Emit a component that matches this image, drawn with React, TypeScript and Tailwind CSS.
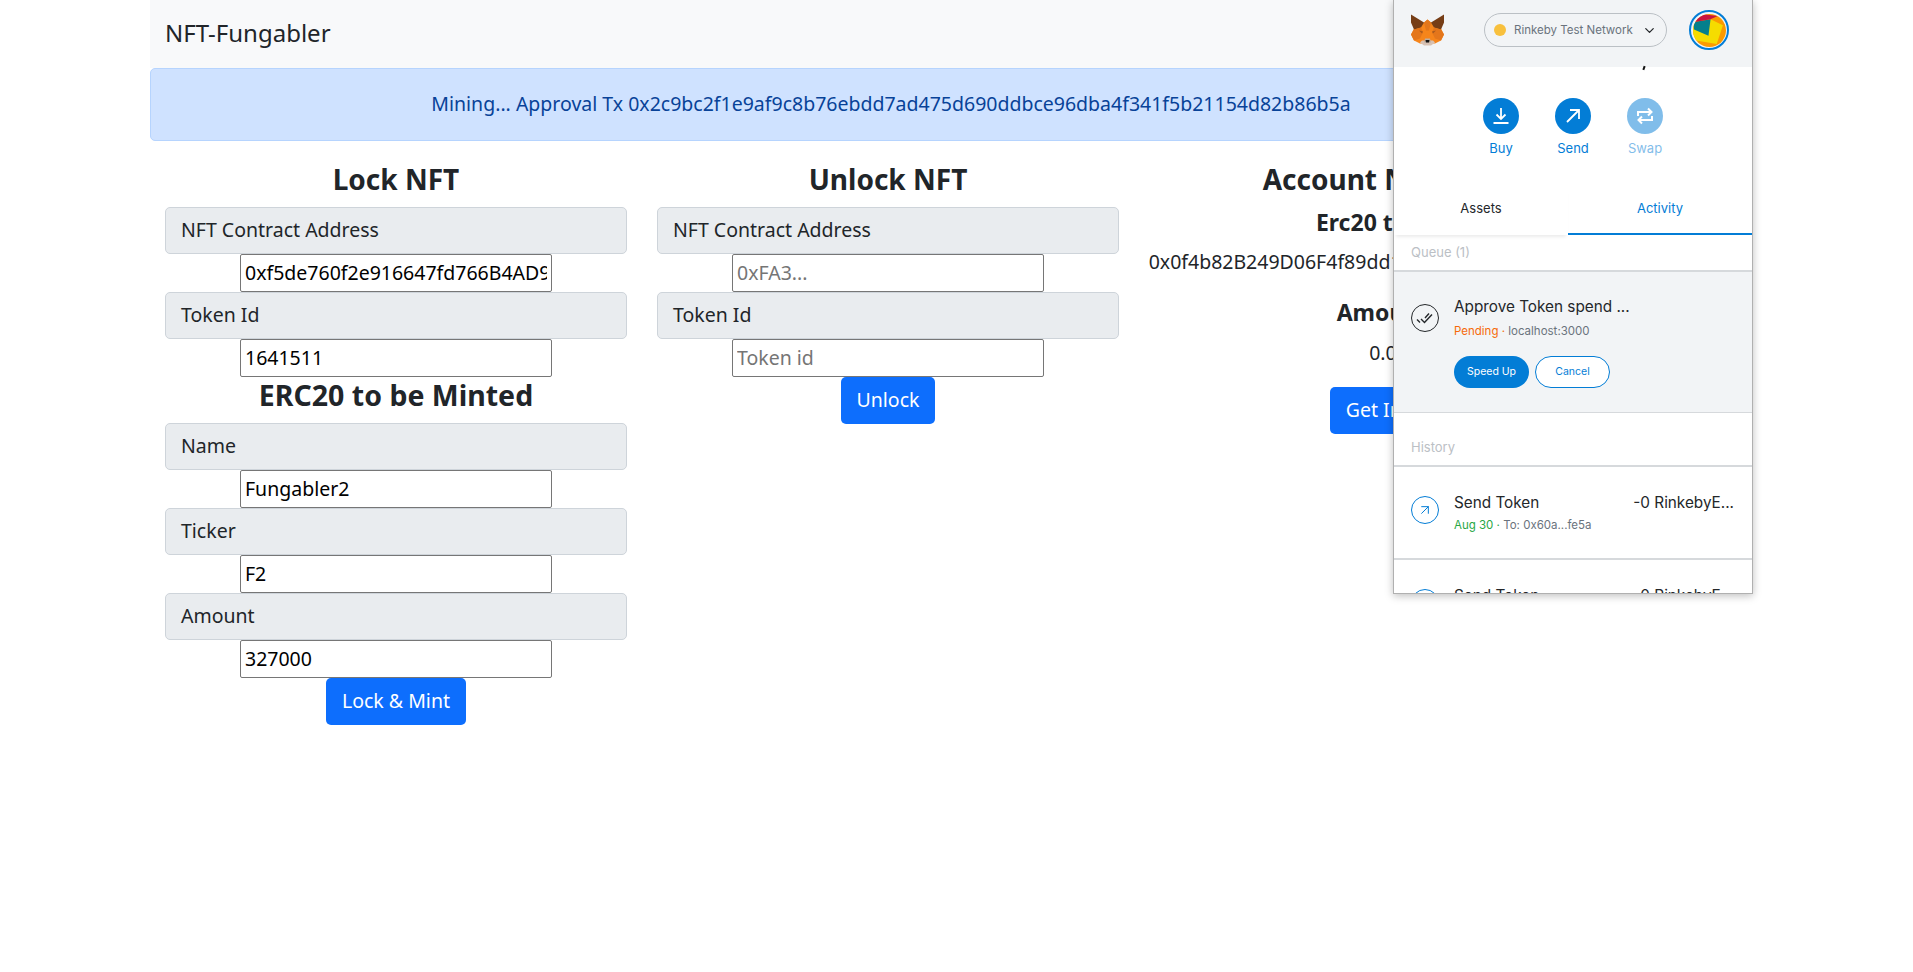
import { ArrowUpRight, ChevronDown } from "lucide-react";

const Field = ({ label, value, placeholder }: { label: string; value?: string; placeholder?: string }) => (
  <>
    <div className="h-[47px] w-[462px] rounded-[5px] border border-[#ced4da] bg-[#e9ecef] px-[15px] text-[19.5px] leading-[43px] text-[#212529]">
      {label}
    </div>
    <input
      readOnly
      value={value ?? ""}
      placeholder={placeholder}
      className="h-[38px] w-[312px] rounded-[2px] border border-[#767676] bg-white px-1 pb-[2px] text-[19.5px] text-black placeholder:text-[#757575]"
    />
  </>
);

const Btn = ({ children }: { children: string }) => (
  <button className="h-[47px] rounded-[5px] bg-[#0d6efd] px-4 pb-[2px] text-[19.5px] text-white">{children}</button>
);

const Fox = () => (
  <svg width="33" height="32" viewBox="0 0 33 31">
    <path d="M3 14 10 9 13 8 16.5 5 20 8 23 9 30 14 33 20 30 26 24 29 9 29 3 26 0 20Z" fill="#f6851b" />
    <path d="M0 0 13 8 10 13 3 15 0 8Z" fill="#763d16" />
    <path d="M33 0 20 8 23 13 30 15 33 8Z" fill="#763d16" />
    <path d="M13 8 16.5 5 20 8 18 16 15 16Z" fill="#e2761b" />
    <path d="M3 15 10 13 12 18 9 24 3 26 0 20Z" fill="#e4761b" />
    <path d="M30 15 23 13 21 18 24 24 30 26 33 20Z" fill="#e4761b" />
    <path d="M8 16 12 17 11 19Z M25 16 21 17 22 19Z" fill="#a85a1e" />
    <path d="M11 26 22 26 24 28 20 31 13 31 9 28Z" fill="#d7c1b3" />
    <path d="M14 24 19 24 20 28 13 28Z" fill="#c0ad9e" />
    <path d="M14.5 25.5 18.5 25.5 18 28 15 28Z" fill="#161616" />
  </svg>
);

const Jazzicon = () => (
  <svg width="33" height="33" viewBox="0 0 32 32" className="rounded-full">
    <rect width="32" height="32" fill="#fb9a00" />
    <path d="M17 5 29 11 23 29 -2 25 0 10Z" fill="#f5dc00" />
    <path d="M0 8 17 5 15 21 1 15Z" fill="#047f8c" />
    <path d="M0 8 8 0 24 2 17 5Z" fill="#c8143f" />
  </svg>
);

const Action = ({ label, faded, children }: { label: string; faded?: boolean; children: React.ReactNode }) => (
  <div className={`flex w-[36px] flex-col items-center ${faded ? "opacity-50" : ""}`}>
    <div className="flex h-[36px] w-[36px] items-center justify-center rounded-full bg-[#037dd6] text-white">{children}</div>
    <div className="mt-[4px] text-[13px] leading-[20px] text-[#037dd6]">{label}</div>
  </div>
);

const SendRow = ({ clipped }: { clipped?: boolean }) => (
  <div className={`flex pl-[17px] pr-[18px] pt-[26px] ${clipped ? "h-[33px] overflow-hidden" : "h-[91px]"}`}>
    <div className="mt-[3px] flex h-[28px] w-[28px] shrink-0 items-center justify-center rounded-full border border-[#037dd6] text-[#037dd6]">
      <ArrowUpRight size={16} strokeWidth={1.5} />
    </div>
    <div className="ml-[15px] flex-1">
      <div className="text-[15.3px] leading-[20px] text-[#24272a]">Send Token</div>
      <div className="mt-[2px] text-[11.5px] leading-[20px] text-[#6a737d]">
        <span className="text-[#28a745]">Aug 30 · </span>To: 0x60a...fe5a
      </div>
    </div>
    <div className="text-[15.3px] leading-[20px] text-[#24272a]">-0 RinkebyE...</div>
  </div>
);

const MetaMask = () => (
  <div className="absolute left-[1393px] top-0 h-[594px] w-[360px] overflow-hidden border-x border-b border-[#b0b0b0] bg-white font-['Inter',sans-serif] shadow-[0_2px_8px_rgba(0,0,0,0.25)]">
    <div className="relative flex h-[67px] items-center bg-[#f2f4f6] pb-[7px] pl-[17px]">
      <Fox />
      <div className="ml-[40px] flex h-[34px] w-[183px] items-center rounded-full border border-[#bbc0c5] pl-[9px]">
        <span className="h-[12px] w-[12px] rounded-full bg-[#f8c03d]" />
        <span className="ml-[8px] pt-[1px] text-[11.5px] text-[#6a737d]">Rinkeby Test Network</span>
        <ChevronDown size={15} className="ml-[9px] text-[#24272a]" />
      </div>
      <div className="ml-[22px] flex h-[40px] w-[40px] items-center justify-center rounded-full border-2 border-[#037dd6]">
        <Jazzicon />
      </div>
    </div>
    {/* bit of the balance line that sticks out under the header */}
    <div className="absolute left-[249px] top-[66px] h-[4px] w-[2px] rotate-[20deg] bg-[#111]" />
    <div className="flex justify-center gap-[36px] pt-[31px]">
      <Action label="Buy">
        <svg width="20" height="20" viewBox="0 0 20 20" fill="none" stroke="currentColor" strokeWidth="1.8">
          <path d="M10 2v11M5.500 8.500 10 13l4.500-4.500M2.500 17h15" />
        </svg>
      </Action>
      <Action label="Send">
        <svg width="20" height="20" viewBox="0 0 20 20" fill="none" stroke="currentColor" strokeWidth="1.8">
          <path d="M4 16 16 4M7 4h9v9" />
        </svg>
      </Action>
      <Action label="Swap" faded>
        <svg width="18" height="18" viewBox="0 0 18 18" fill="none" stroke="currentColor" strokeWidth="2">
          <path d="M2 9V5h13M12 1.500 15.500 5 12 8.500M16 9v4H3M6 9.500 2.500 13 6 16.500" />
        </svg>
      </Action>
    </div>
    <div className="mt-[28px] flex h-[49px] text-[13px]">
      <div className="flex w-[174px] items-center justify-center pb-[4px] text-[#24272a] shadow-[0_4px_3px_-2px_rgba(0,0,0,0.08)]">Assets</div>
      <div className="flex flex-1 items-center justify-center border-b-2 border-[#037dd6] pb-[2px] text-[#037dd6]">Activity</div>
    </div>
    <div className="h-[37px] border-b-2 border-[#d6d9dc] pl-[17px] pt-[7px] text-[13px] leading-[20px] text-[#bbc0c5]">Queue (1)</div>
    <div className="flex h-[141px] border-b border-[#d6d9dc] bg-[#f2f4f6] pl-[17px] pt-[25px]">
      <div className="mt-[7px] flex h-[28px] w-[28px] shrink-0 items-center justify-center rounded-full border border-[#24272a]">
        <svg width="26" height="26" viewBox="0 0 26 26" fill="none" stroke="#24272a" strokeWidth="1.4">
          <path d="M5 14.500l3 3M9 14l3.500 3.500 7.500-8M13 13l4-4.500" />
        </svg>
      </div>
      <div className="ml-[15px]">
        <div className="text-[15.3px] leading-[20px] text-[#24272a]">Approve Token spend ...</div>
        <div className="mt-[4px] text-[11.5px] leading-[20px] text-[#6a737d]">
          <span className="text-[#f66a0a]">Pending · </span>localhost:3000
        </div>
        <div className="mt-[15px] flex gap-[6px] text-[10.5px]">
          <button className="h-[32px] w-[75px] rounded-full bg-[#037dd6] text-white">Speed Up</button>
          <button className="h-[32px] w-[75px] rounded-full border border-[#037dd6] bg-white text-[#037dd6]">Cancel</button>
        </div>
      </div>
    </div>
    <div className="h-[54px] border-b-2 border-[#d6d9dc] pl-[17px] pt-[24px] text-[13px] leading-[20px] text-[#bbc0c5]">History</div>
    <div className="border-b-2 border-[#d6d9dc]">
      <SendRow />
    </div>
    <SendRow clipped />
  </div>
);

export default function App() {
  return (
    <div className="relative h-[972px] overflow-hidden bg-white pl-[150px] font-['Noto_Sans',sans-serif] text-[#212529]">
      <div className="w-[1482px]">
        <div className="flex h-[68px] items-center bg-[#f8f9fa] px-[15px] pb-[3px] text-[24px]">NFT-Fungabler</div>
        <div className="flex h-[73px] items-center justify-center rounded-[5px] border border-[#b6d4fe] bg-[#cfe2ff] pb-[2px] text-[19.5px] text-[#084298]">
          Mining... Approval Tx 0x2c9bc2f1e9af9c8b76ebdd7ad475d690ddbce96dba4f341f5b21154d82b86b5a
        </div>
        <div className="flex">
          <div className="flex w-[492px] flex-col items-center">
            <h3 className="mb-[10px] mt-[20px] text-[28px] font-bold leading-[36px]">Lock NFT</h3>
            <Field label="NFT Contract Address" value="0xf5de760f2e916647fd766B4AD9E85ff943cE3A2b" />
            <Field label="Token Id" value="1641511" />
            <h3 className="mb-[10px] text-[28.5px] font-bold leading-[36px]">ERC20 to be Minted</h3>
            <Field label="Name" value="Fungabler2" />
            <Field label="Ticker" value="F2" />
            <Field label="Amount" value="327000" />
            <Btn>Lock &amp; Mint</Btn>
          </div>
          <div className="flex w-[492px] flex-col items-center">
            <h3 className="mb-[10px] mt-[20px] text-[28px] font-bold leading-[36px]">Unlock NFT</h3>
            <Field label="NFT Contract Address" placeholder="0xFA3..." />
            <Field label="Token Id" placeholder="Token id" />
            <Btn>Unlock</Btn>
          </div>
          <div className="flex w-[498px] flex-col items-center text-center">
            <h3 className="mb-[10px] mt-[20px] whitespace-nowrap text-[28px] font-bold leading-[36px]">Account NFT Info</h3>
            <h4 className="text-[23px] font-bold leading-[30px]">Erc20 token</h4>
            <p className="mt-[10px] whitespace-nowrap text-[19.5px] leading-[30px]">0x0f4b82B249D06F4f89dd15aC8a1E5D3c7b604A21</p>
            <h4 className="mt-[20px] text-[23px] font-bold leading-[30px]">Amount</h4>
            <p className="mb-[19px] mt-[11px] text-[19.5px] leading-[30px]">0.0</p>
            <Btn>Get Info</Btn>
          </div>
        </div>
      </div>
      <MetaMask />
    </div>
  );
}
